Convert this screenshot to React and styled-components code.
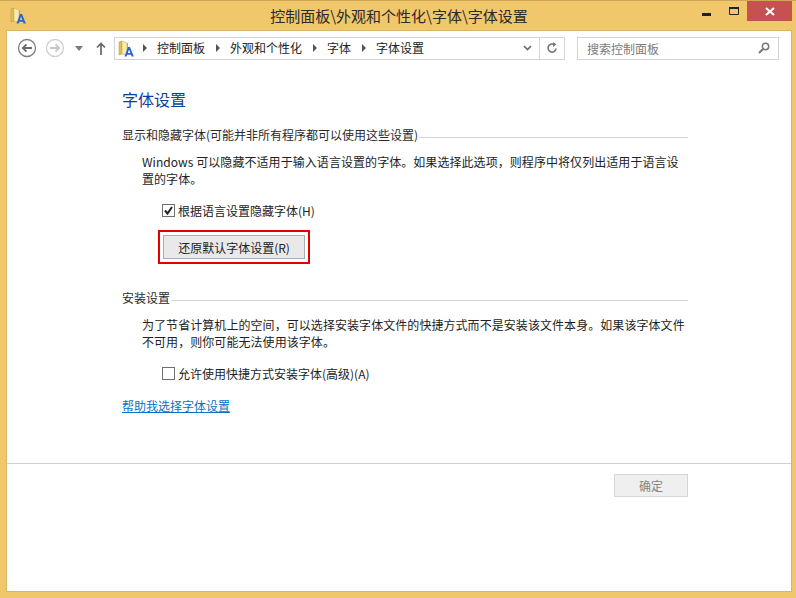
import React from 'react';
import styled, { createGlobalStyle } from 'styled-components';

const Global = createGlobalStyle`
  html, body { margin: 0; padding: 0; background: #f0c66b; }
  * { box-sizing: border-box; }
`;

const Win = styled.div`
  width: 796px; height: 598px; display: flex; flex-direction: column;
  background: #f1c76c; border-top: 1px solid #cda658;
  font-family: "Noto Sans CJK SC", "Liberation Sans", sans-serif;
  font-size: 12px; color: #222; overflow: hidden;
`;
const TitleBar = styled.div`
  height: 29px; flex: none; display: flex; align-items: flex-start; position: relative;
`;
const TitleIcon = styled.div` margin: 6px 0 0 10px; width: 18px; height: 18px; `;
const TitleText = styled.div`
  position: absolute; left: 0; right: 0; top: 4px; text-align: center;
  font-size: 15px; line-height: 22px; color: #2a2a2a; padding-left: 2px;
`;
const Controls = styled.div` margin-left: auto; margin-right: 4px; display: flex; align-items: flex-start; `;
const Ctl = styled.div`
  width: ${p => p.$w}px; height: 20px; display: flex; align-items: center; justify-content: center;
  background: ${p => p.$bg || 'transparent'};
`;
const Client = styled.div`
  margin: 0 4px 6px 6px; flex: 1; background: #fff; border: 1px solid #d9b566;
  display: flex; flex-direction: column; min-height: 0;
`;
const Nav = styled.div`
  height: 37px; flex: none; display: flex; align-items: center; padding: 0 0 3px 10px;
`;
const NavBtn = styled.div`
  width: ${p => p.$w}px; height: 20px; display: flex; align-items: center; justify-content: center;
  margin-right: ${p => p.$mr || 0}px;
`;
const Address = styled.div`
  width: 451px; height: 23px; border: 1px solid #d4d4d4; display: flex; align-items: center;
  margin-left: 7px; padding-left: 3px;
`;
const Crumb = styled.span` color: #222; margin-right: 11px; line-height: 20px; `;
const Arrow = styled.span`
  width: 0; height: 0; border-left: 4px solid #555; border-top: 4px solid transparent;
  border-bottom: 4px solid transparent; margin-right: 10px; margin-left: ${p => p.$ml || 0}px;
`;
const AddressEnd = styled.div`
  margin-left: auto; display: flex; align-items: center; height: 100%;
`;
const Sep = styled.div` width: 1px; height: 21px; background: #d4d4d4; margin: 0 6px 0 7px; `;
const Search = styled.div`
  width: 202px; height: 23px; border: 1px solid #d4d4d4; margin-left: 12px; display: flex;
  align-items: center; padding: 0 8px 0 9px; color: #7a7a7a; justify-content: space-between;
`;
const Main = styled.div` flex: 1; padding: 0 103px 0 115px; min-height: 0; `;
const PageTitle = styled.h1`
  margin: 20px 0 0; font-size: 16px; font-weight: 400; color: #0b3f9e; line-height: 22px;
`;
const Heading = styled.div`
  margin-top: ${p => p.$mt}px; display: flex; align-items: center; line-height: 18px; color: #2a2a2a;
  &::after { content: ""; flex: 1; height: 1px; background: #d5d5d5; margin: 4px 0 0 1px; }
`;
const Para = styled.p`
  margin: ${p => p.$mt}px 0 0 20px; line-height: 17px; color: #222; letter-spacing: .06px;
`;
const CheckRow = styled.label`
  margin: ${p => p.$mt}px 0 0 40px; display: flex; align-items: center; height: 16px; gap: 3px;
`;
const Box = styled.span`
  width: 13px; height: 13px; border: 1px solid #6f6f6f; background: #fff; display: flex;
  align-items: center; justify-content: center; flex: none;
`;
const Highlight = styled.div`
  margin: 12px 0 0 36px; width: 152px; height: 34px; border: 2px solid #e50000; padding: 3px;
`;
const Btn = styled.div`
  width: 100%; height: 24px; background: #e9e9e9; border: 1px solid #acacac; display: flex;
  align-items: center; justify-content: center; font-size: 12px; color: #222;
`;
const Link = styled.a`
  display: block; margin-top: 16px; color: #0a72c4; text-decoration: underline; line-height: 18px;
`;
const Footer = styled.div`
  flex: none; height: 128px; border-top: 1px solid #cfcfcf; display: flex; justify-content: flex-end;
  padding: 10px 103px 0 0;
`;
const OkBtn = styled.div`
  width: 74px; height: 23px; background: #efefef; border: 1px solid #d6d6d6; color: #838383;
  display: flex; align-items: center; justify-content: center;
`;

const FontIcon = () => (
  <svg width="16" height="17" viewBox="0 0 16 17">
    <path d="M1 2 L4 1 V14 L1 15Z" fill="#e4bf4e" stroke="#b59a45" strokeWidth=".5" />
    <path d="M4 1 L9 3 V15 L4 14Z" fill="#f8ebb0" stroke="#c6a94f" strokeWidth=".5" />
    <path d="M9 3 h1 V14 H9Z" fill="#c9a64a" />
    <path d="M6.5 16.5 L10 7 H12 L15.8 16.5 H13.6 L13 14.7 H9.2 L8.6 16.5Z M9.8 13 H12.4 L11.1 9.4Z" fill="#2563dc" fillRule="evenodd" />
  </svg>
);

export default function App() {
  return (
    <Win>
      <Global />
      <TitleBar>
        <TitleIcon><FontIcon /></TitleIcon>
        <TitleText>控制面板\外观和个性化\字体\字体设置</TitleText>
        <Controls>
          <Ctl $w={27}>
            <svg width="9" height="3" style={{ marginTop: 7 }}><rect width="9" height="3" fill="#222" /></svg>
          </Ctl>
          <Ctl $w={27}>
            <svg width="10" height="8"><path d="M.5 .5h9v7h-9z" fill="none" stroke="#222" strokeWidth="1" /><rect width="10" height="2" fill="#222" /></svg>
          </Ctl>
          <Ctl $w={45} $bg="#c75050">
            <svg width="10" height="9"><path d="M1 1l8 7M9 1l-8 7" stroke="#fff" strokeWidth="2" /></svg>
          </Ctl>
        </Controls>
      </TitleBar>
      <Client>
        <Nav>
          <NavBtn $w={20} $mr={8}>
            <svg width="20" height="20" viewBox="0 0 20 20"><circle cx="10" cy="10" r="8.5" fill="#fff" stroke="#7d7d7d" strokeWidth="1.3" /><path d="M15 10H6M9.5 6.3L5.8 10l3.7 3.7" fill="none" stroke="#6b6b6b" strokeWidth="1.8" /></svg>
          </NavBtn>
          <NavBtn $w={20} $mr={8}>
            <svg width="20" height="20" viewBox="0 0 20 20"><circle cx="10" cy="10" r="8.5" fill="#fff" stroke="#cfcfcf" strokeWidth="1.3" /><path d="M5 10h9M10.5 6.3l3.7 3.7-3.7 3.7" fill="none" stroke="#c6c6c6" strokeWidth="1.8" /></svg>
          </NavBtn>
          <NavBtn $w={12} $mr={10}>
            <svg width="8" height="5"><path d="M0 0h8L4 5z" fill="#7b7b7b" /></svg>
          </NavBtn>
          <NavBtn $w={12}>
            <svg width="10" height="13" viewBox="0 0 10 13"><path d="M5 13V2M1 5.5L5 1.5l4 4" fill="none" stroke="#666" strokeWidth="1.7" /></svg>
          </NavBtn>
          <Address>
            <FontIcon />
            <Arrow $ml={9} />
            <Crumb>控制面板</Crumb>
            <Arrow />
            <Crumb>外观和个性化</Crumb>
            <Arrow />
            <Crumb>字体</Crumb>
            <Arrow />
            <Crumb>字体设置</Crumb>
            <AddressEnd>
              <svg width="9" height="6"><path d="M1 1l3.5 3.5L8 1" fill="none" stroke="#666" strokeWidth="1.6" /></svg>
              <Sep />
              <svg width="12" height="12" viewBox="0 0 12 12" style={{ marginRight: 6 }}><path d="M10 6.5A4 4 0 1 1 8 2.6" fill="none" stroke="#777" strokeWidth="1.6" /><path d="M7 0v5l3.5-2.5z" fill="#777" /></svg>
            </AddressEnd>
          </Address>
          <Search>
            <span>搜索控制面板</span>
            <svg width="12" height="12" viewBox="0 0 12 12"><circle cx="7.5" cy="4.5" r="3.2" fill="none" stroke="#777" strokeWidth="1.5" /><path d="M5 7L1 11" stroke="#777" strokeWidth="2" /></svg>
          </Search>
        </Nav>
        <Main>
          <PageTitle>字体设置</PageTitle>
          <Heading $mt={16}>显示和隐藏字体(可能并非所有程序都可以使用这些设置)</Heading>
          <Para $mt={9}>Windows 可以隐藏不适用于输入语言设置的字体。如果选择此选项，则程序中将仅列出适用于语言设置的字体。</Para>
          <CheckRow $mt={15}>
            <Box><svg width="11" height="11" viewBox="0 0 11 11"><path d="M2 5.5l2.5 3L9 2" fill="none" stroke="#222" strokeWidth="2" /></svg></Box>
            根据语言设置隐藏字体(H)
          </CheckRow>
          <Highlight><Btn>还原默认字体设置(R)</Btn></Highlight>
          <Heading $mt={25}>安装设置</Heading>
          <Para $mt={9}>为了节省计算机上的空间，可以选择安装字体文件的快捷方式而不是安装该文件本身。如果该字体文件不可用，则你可能无法使用该字体。</Para>
          <CheckRow $mt={15}><Box />允许使用快捷方式安装字体(高级)(A)</CheckRow>
          <Link>帮助我选择字体设置</Link>
        </Main>
        <Footer><OkBtn>确定</OkBtn></Footer>
      </Client>
    </Win>
  );
}
